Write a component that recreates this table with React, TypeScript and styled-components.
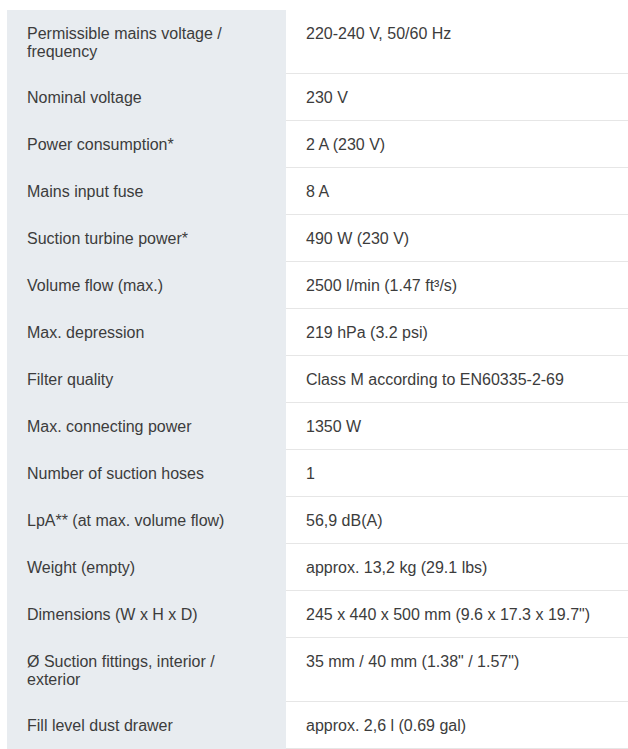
import React from "react";
import styled, { createGlobalStyle } from "styled-components";

const Global = createGlobalStyle`
  html, body { margin: 0; padding: 0; background: #ffffff; }
  body { font-family: "Liberation Sans", Arial, sans-serif; }
`;

const Page = styled.div`
  padding: 10px 0 0 7px;
  overflow: hidden;
`;

const Table = styled.table`
  width: 100%;
  border-collapse: separate;
  border-spacing: 0;
  font-family: "Liberation Sans", Arial, sans-serif;
  font-size: 16px;
  line-height: 18px;
  color: #3c3c3c;
`;

const Label = styled.th`
  width: 239px;
  background: #e8ecf0;
  text-align: left;
  font-weight: normal;
  vertical-align: top;
  padding: 15px 20px 13px 20px;
`;

const Value = styled.td`
  text-align: left;
  vertical-align: top;
  padding: 15px 20px 13px 20px;
  border-bottom: 1px solid #e6e6e6;
`;

const rows: [string, string][] = [
  ["Permissible mains voltage / frequency", "220-240 V, 50/60 Hz"],
  ["Nominal voltage", "230 V"],
  ["Power consumption*", "2 A (230 V)"],
  ["Mains input fuse", "8 A"],
  ["Suction turbine power*", "490 W (230 V)"],
  ["Volume flow (max.)", "2500 l/min (1.47 ft³/s)"],
  ["Max. depression", "219 hPa (3.2 psi)"],
  ["Filter quality", "Class M according to EN60335-2-69"],
  ["Max. connecting power", "1350 W"],
  ["Number of suction hoses", "1"],
  ["LpA** (at max. volume flow)", "56,9 dB(A)"],
  ["Weight (empty)", "approx. 13,2 kg (29.1 lbs)"],
  ["Dimensions (W x H x D)", "245 x 440 x 500 mm (9.6 x 17.3 x 19.7\")"],
  ["Ø Suction fittings, interior / exterior", "35 mm / 40 mm (1.38\" / 1.57\")"],
  ["Fill level dust drawer", "approx. 2,6 l (0.69 gal)"],
];

export default function App() {
  return (
    <>
      <Global />
      <Page>
        <Table>
          <tbody>
            {rows.map(([k, v]) => (
              <tr key={k}>
                <Label>{k}</Label>
                <Value>{v}</Value>
              </tr>
            ))}
          </tbody>
        </Table>
      </Page>
    </>
  );
}
